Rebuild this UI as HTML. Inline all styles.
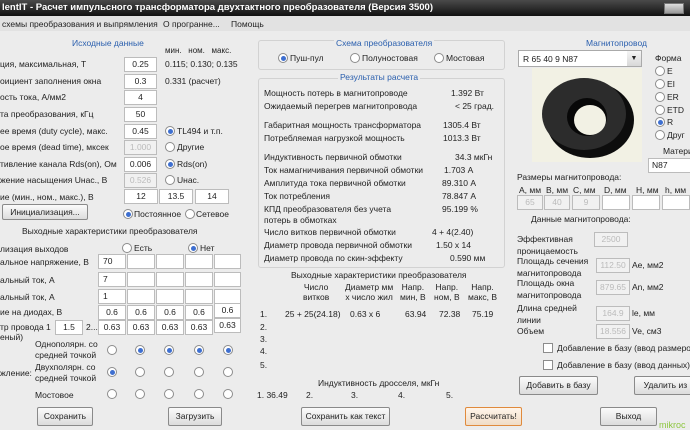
<!DOCTYPE html><html><head><meta charset="utf-8"><style>
*{margin:0;padding:0;box-sizing:border-box}
body{width:690px;height:430px;overflow:hidden;background:#ececec;font-family:"Liberation Sans",sans-serif;font-size:8.5px;color:#222;position:relative}
.a{position:absolute;white-space:nowrap}
.h{color:#2a5fae}
.i{position:absolute;background:#fff;border:1px solid #bcbcbc;height:15px;font-size:8.5px;text-align:center;line-height:13px;white-space:nowrap;overflow:hidden}
.d{background:#f1f1f1;color:#bbb}
.r{position:absolute;width:10px;height:10px;border-radius:50%;border:1px solid #8c8c8c;background:#fff}
.r.on::after{content:"";position:absolute;left:1.5px;top:1.5px;width:5px;height:5px;border-radius:50%;background:#3e6fd0}
.b{position:absolute;border:1px solid #8a8a8a;border-radius:2px;background:linear-gradient(#fbfbfb,#dcdcdc);text-align:center;font-size:8.5px;line-height:17px;height:19px;white-space:nowrap;overflow:hidden}
.g{position:absolute;border:1px solid #d2d2d2;border-radius:3px}
.cb{position:absolute;width:10px;height:10px;border:1px solid #8c8c8c;background:#fff}
</style></head><body>
<div class="a" style="left:0;top:0;width:690px;height:16px;background:linear-gradient(#4a4a4a,#111);color:#fff;font-weight:bold;padding:2px 0 0 2px;font-size:9.5px">lentIT - Расчет импульсного трансформатора двухтактного преобразователя (Версия 3500)</div>
<div class="a" style="left:664px;top:3px;width:20px;height:11px;background:linear-gradient(#ddd,#999);border:1px solid #777"></div>
<div class="a" style="left:0;top:16px;width:690px;height:15px;background:#e2e2e2"></div>
<div class="a" style="left:2px;top:19px">схемы преобразования и выпрямления</div>
<div class="a" style="left:163px;top:19px">О програнне...</div>
<div class="a" style="left:231px;top:19px">Помощь</div>

<!-- left -->
<div class="a h" style="left:72px;top:38px">Исходные данные</div>
<div class="a" style="left:165px;top:46px;font-size:8px">мин.&nbsp;&nbsp;&nbsp;ном.&nbsp;&nbsp;&nbsp;макс.</div>
<div class="a" style="left:0;top:59px">ция, максимальная, Т</div><div class="i" style="left:124px;top:57px;width:33px">0.25</div><div class="a" style="left:165px;top:59px">0.115; 0.130; 0.135</div>
<div class="a" style="left:0;top:76px">оициент заполнения окна</div><div class="i" style="left:124px;top:74px;width:33px">0.3</div><div class="a" style="left:165px;top:76px">0.331 (расчет)</div>
<div class="a" style="left:0;top:92px">ость тока, А/мм2</div><div class="i" style="left:124px;top:90px;width:33px">4</div>
<div class="a" style="left:0;top:109px">та преобразования, кГц</div><div class="i" style="left:124px;top:107px;width:33px">50</div>
<div class="a" style="left:0;top:126px">ее время (duty cycle), макс.</div><div class="i" style="left:124px;top:124px;width:33px">0.45</div><div class="r on" style="left:165px;top:126px"></div><div class="a" style="left:177px;top:126px">TL494 и т.п.</div>
<div class="a" style="left:0;top:142px">ое время (dead time), мксек</div><div class="i d" style="left:124px;top:140px;width:33px">1.000</div><div class="r" style="left:165px;top:142px"></div><div class="a" style="left:177px;top:142px">Другие</div>
<div class="a" style="left:0;top:159px">тивление канала Rds(on), Ом</div><div class="i" style="left:124px;top:157px;width:33px">0.006</div><div class="r on" style="left:165px;top:159px"></div><div class="a" style="left:177px;top:159px">Rds(on)</div>
<div class="a" style="left:0;top:175px">жение насыщения Uнас., В</div><div class="i d" style="left:124px;top:173px;width:33px">0.526</div><div class="r" style="left:165px;top:175px"></div><div class="a" style="left:177px;top:175px">Uнас.</div>
<div class="a" style="left:0;top:192px">ие (мин., ном., макс.), В</div><div class="i" style="left:124px;top:189px;width:34px">12</div><div class="i" style="left:159px;top:189px;width:34px">13.5</div><div class="i" style="left:195px;top:189px;width:34px">14</div>
<div class="b" style="left:2px;top:204px;width:86px;height:16px;line-height:14px">Инициализация...</div>
<div class="r on" style="left:123px;top:209px"></div><div class="a" style="left:134px;top:209px">Постоянное</div><div class="r" style="left:185px;top:209px"></div><div class="a" style="left:196px;top:209px">Сетевое</div>
<div class="a" style="left:22px;top:226px">Выходные характеристики преобразователя</div>
<div class="a" style="left:0;top:244px">лизация выходов</div><div class="r" style="left:122px;top:243px"></div><div class="a" style="left:134px;top:243px">Есть</div><div class="r on" style="left:188px;top:243px"></div><div class="a" style="left:200px;top:243px">Нет</div>
<div class="a" style="left:0;top:257px">альное напряжение, В</div><div class="a" style="left:0;top:275px">альный ток, А</div><div class="a" style="left:0;top:292px">альный ток, А</div><div class="a" style="left:0;top:307px">ие на диодах, В</div><div class="a" style="left:0;top:322px">тр провода 1</div><div class="a" style="left:0;top:332px">еный)</div>
<div class="i" style="left:55px;top:320px;width:28px">1.5</div><div class="a" style="left:86px;top:322px">2...</div>
<div class="i" style="left:98px;top:254px;width:28px;text-align:left;padding-left:4px">70</div><div class="i" style="left:127px;top:254px;width:28px"></div><div class="i" style="left:156px;top:254px;width:28px"></div><div class="i" style="left:185px;top:254px;width:28px"></div><div class="i" style="left:214px;top:254px;width:27px"></div>
<div class="i" style="left:98px;top:272px;width:28px;text-align:left;padding-left:4px">7</div><div class="i" style="left:127px;top:272px;width:28px"></div><div class="i" style="left:156px;top:272px;width:28px"></div><div class="i" style="left:185px;top:272px;width:28px"></div><div class="i" style="left:214px;top:272px;width:27px"></div>
<div class="i" style="left:98px;top:289px;width:28px;text-align:left;padding-left:4px">1</div><div class="i" style="left:127px;top:289px;width:28px"></div><div class="i" style="left:156px;top:289px;width:28px"></div><div class="i" style="left:185px;top:289px;width:28px"></div><div class="i" style="left:214px;top:289px;width:27px"></div>
<div class="i" style="left:98px;top:305px;width:28px">0.6</div><div class="i" style="left:127px;top:305px;width:28px">0.6</div><div class="i" style="left:156px;top:305px;width:28px">0.6</div><div class="i" style="left:185px;top:305px;width:28px">0.6</div><div class="i" style="left:214px;top:303px;width:27px">0.6</div>
<div class="i" style="left:98px;top:320px;width:28px">0.63</div><div class="i" style="left:127px;top:320px;width:28px">0.63</div><div class="i" style="left:156px;top:320px;width:28px">0.63</div><div class="i" style="left:185px;top:320px;width:28px">0.63</div><div class="i" style="left:214px;top:318px;width:27px">0.63</div>
<div class="a" style="left:35px;top:339px;line-height:11px">Однополярн. со<br>средней точкой</div>
<div class="a" style="left:0;top:368px">жление:</div><div class="a" style="left:35px;top:362px;line-height:11px">Двухполярн. со<br>средней точкой</div>
<div class="a" style="left:35px;top:390px">Мостовое</div>
<div class="r" style="left:107px;top:345px"></div><div class="r on" style="left:135px;top:345px"></div><div class="r on" style="left:164px;top:345px"></div><div class="r on" style="left:194px;top:345px"></div><div class="r on" style="left:223px;top:345px"></div>
<div class="r on" style="left:107px;top:367px"></div><div class="r" style="left:135px;top:367px"></div><div class="r" style="left:164px;top:367px"></div><div class="r" style="left:194px;top:367px"></div><div class="r" style="left:223px;top:367px"></div>
<div class="r" style="left:107px;top:389px"></div><div class="r" style="left:135px;top:389px"></div><div class="r" style="left:164px;top:389px"></div><div class="r" style="left:194px;top:389px"></div><div class="r" style="left:223px;top:389px"></div>
<div class="b" style="left:37px;top:407px;width:56px">Сохранить</div><div class="b" style="left:168px;top:407px;width:54px">Загрузить</div>

<!-- center -->
<div class="g" style="left:258px;top:40px;width:247px;height:30px"></div>
<div class="a h" style="left:334px;top:38px;background:#ececec;padding:0 2px">Схема преобразователя</div>
<div class="r on" style="left:278px;top:53px"></div><div class="a" style="left:290px;top:53px">Пуш-пул</div>
<div class="r" style="left:350px;top:53px"></div><div class="a" style="left:362px;top:53px">Полуностовая</div>
<div class="r" style="left:434px;top:53px"></div><div class="a" style="left:446px;top:53px">Мостовая</div>
<div class="g" style="left:258px;top:78px;width:247px;height:190px"></div>
<div class="a h" style="left:338px;top:72px;background:#ececec;padding:0 2px">Результаты расчета</div>
<div class="a" style="left:264px;top:88px">Мощность потерь в магнитопроводе</div><div class="a" style="left:451px;top:88px">1.392 Вт</div>
<div class="a" style="left:264px;top:101px">Ожидаемый перегрев магнитопровода</div><div class="a" style="left:455px;top:101px">&lt; 25 град.</div>
<div class="a" style="left:264px;top:120px">Габаритная мощность трансформатора</div><div class="a" style="left:443px;top:120px">1305.4 Вт</div>
<div class="a" style="left:264px;top:133px">Потребляемая нагрузкой мощность</div><div class="a" style="left:443px;top:133px">1013.3 Вт</div>
<div class="a" style="left:264px;top:152px">Индуктивность первичной обмотки</div><div class="a" style="left:455px;top:152px">34.3 мкГн</div>
<div class="a" style="left:264px;top:165px">Ток намагничивания первичной обмотки</div><div class="a" style="left:444px;top:165px">1.703 А</div>
<div class="a" style="left:264px;top:178px">Амплитуда тока первичной обмотки</div><div class="a" style="left:442px;top:178px">89.310 А</div>
<div class="a" style="left:264px;top:191px">Ток потребления</div><div class="a" style="left:442px;top:191px">78.847 А</div>
<div class="a" style="left:264px;top:204px;line-height:11px">КПД преобразователя без учета<br>потерь в обмотках</div><div class="a" style="left:442px;top:204px">95.199 %</div>
<div class="a" style="left:264px;top:227px">Число витков первичной обмотки</div><div class="a" style="left:432px;top:227px">4 + 4(2.40)</div>
<div class="a" style="left:264px;top:240px">Диаметр провода первичной обмотки</div><div class="a" style="left:436px;top:240px">1.50 x 14</div>
<div class="a" style="left:264px;top:253px">Диаметр провода по скин-эффекту</div><div class="a" style="left:450px;top:253px">0.590 мм</div>
<div class="a" style="left:291px;top:270px">Выходные характеристики преобразователя</div>
<div class="a" style="left:303px;top:282px;line-height:10px;text-align:center">Число<br>витков</div>
<div class="a" style="left:345px;top:282px;line-height:10px;text-align:center">Диаметр мм<br>x число жил</div>
<div class="a" style="left:400px;top:282px;line-height:10px;text-align:center">Напр.<br>мин, В</div>
<div class="a" style="left:434px;top:282px;line-height:10px;text-align:center">Напр.<br>ном, В</div>
<div class="a" style="left:468px;top:282px;line-height:10px;text-align:center">Напр.<br>макс, В</div>
<div class="a" style="left:260px;top:309px">1.</div><div class="a" style="left:285px;top:309px">25 + 25(24.18)</div><div class="a" style="left:350px;top:309px">0.63 x 6</div><div class="a" style="left:405px;top:309px">63.94</div><div class="a" style="left:439px;top:309px">72.38</div><div class="a" style="left:472px;top:309px">75.19</div>
<div class="a" style="left:260px;top:322px">2.</div><div class="a" style="left:260px;top:334px">3.</div><div class="a" style="left:260px;top:346px">4.</div><div class="a" style="left:260px;top:360px">5.</div>
<div class="a" style="left:318px;top:378px">Индуктивность дросселя, мкГн</div>
<div class="a" style="left:257px;top:390px">1. 36.49</div><div class="a" style="left:306px;top:390px">2.</div><div class="a" style="left:351px;top:390px">3.</div><div class="a" style="left:398px;top:390px">4.</div><div class="a" style="left:446px;top:390px">5.</div>
<div class="b" style="left:301px;top:407px;width:89px">Сохранить как текст</div>
<div class="b" style="left:465px;top:407px;width:57px;border:1px solid #e08a3c;background:linear-gradient(#fff5ea,#f0dcc6)">Рассчитать!</div>

<!-- right -->
<div class="a h" style="left:586px;top:38px">Магнитопровод</div>
<div class="a" style="left:518px;top:50px;width:124px;height:17px;background:#fff;border:1px solid #aaa;padding:3px 4px">R 65 40 9 N87</div>
<div class="a" style="left:627px;top:51px;width:14px;height:15px;background:linear-gradient(#f5f5f5,#d8d8d8);font-size:7px;text-align:center;line-height:15px">▼</div>
<div class="a" style="left:532px;top:68px;width:110px;height:94px;background:#f2f1e4"></div>
<svg class="a" style="left:534px;top:72px" width="106" height="90"><ellipse cx="56" cy="48" rx="44" ry="38" fill="#0d0d0d"/><ellipse cx="50" cy="42" rx="42" ry="36" fill="#2c2c2c"/><ellipse cx="53" cy="45" rx="20" ry="19" fill="#080808"/><ellipse cx="56" cy="48" rx="16" ry="15" fill="#f2f1e4"/></svg>
<div class="a" style="left:655px;top:53px">Форма</div>
<div class="r" style="left:655px;top:66px"></div><div class="a" style="left:667px;top:66px">E</div>
<div class="r" style="left:655px;top:79px"></div><div class="a" style="left:667px;top:79px">EI</div>
<div class="r" style="left:655px;top:92px"></div><div class="a" style="left:667px;top:92px">ER</div>
<div class="r" style="left:655px;top:105px"></div><div class="a" style="left:667px;top:105px">ETD</div>
<div class="r on" style="left:655px;top:117px"></div><div class="a" style="left:667px;top:117px">R</div>
<div class="r" style="left:655px;top:130px"></div><div class="a" style="left:667px;top:130px">Друг</div>
<div class="a" style="left:663px;top:146px">Матери</div>
<div class="i" style="left:648px;top:158px;width:44px;text-align:left;padding-left:3px">N87</div>
<div class="a" style="left:517px;top:172px">Размеры магнитопровода:</div>
<div class="a" style="left:519px;top:185px">А, мм</div><div class="a" style="left:546px;top:185px">B, мм</div><div class="a" style="left:573px;top:185px">C, мм</div><div class="a" style="left:604px;top:185px">D, мм</div><div class="a" style="left:636px;top:185px">H, мм</div><div class="a" style="left:665px;top:185px">h, мм</div>
<div class="i d" style="left:517px;top:195px;width:26px">65</div><div class="i d" style="left:544px;top:195px;width:26px">40</div><div class="i d" style="left:572px;top:195px;width:28px">9</div><div class="i" style="left:602px;top:195px;width:28px"></div><div class="i" style="left:632px;top:195px;width:28px"></div><div class="i" style="left:662px;top:195px;width:28px"></div>
<div class="a" style="left:531px;top:214px">Данные магнитопровода:</div>
<div class="a" style="left:517px;top:233px;line-height:12px">Эффективная<br>проницаемость</div><div class="i d" style="left:594px;top:232px;width:34px">2500</div>
<div class="a" style="left:517px;top:255px;line-height:12px">Площадь сечения<br>магнитопровода</div><div class="i d" style="left:596px;top:258px;width:34px">112.50</div><div class="a" style="left:632px;top:260px">Ae, мм2</div>
<div class="a" style="left:517px;top:277px;line-height:12px">Площадь окна<br>магнитопровода</div><div class="i d" style="left:596px;top:280px;width:34px">879.65</div><div class="a" style="left:632px;top:282px">An, мм2</div>
<div class="a" style="left:517px;top:302px;line-height:12px">Длина средней<br>линии</div><div class="i d" style="left:596px;top:306px;width:34px">164.9</div><div class="a" style="left:632px;top:308px">le, мм</div>
<div class="a" style="left:517px;top:326px">Объем</div><div class="i d" style="left:596px;top:324px;width:34px">18.556</div><div class="a" style="left:632px;top:326px">Ve, см3</div>
<div class="cb" style="left:543px;top:343px"></div><div class="a" style="left:557px;top:343px">Добавление в базу (ввод размеров)</div>
<div class="cb" style="left:543px;top:360px"></div><div class="a" style="left:557px;top:360px">Добавление в базу (ввод данных)</div>
<div class="b" style="left:519px;top:376px;width:79px">Добавить в базу</div>
<div class="b" style="left:634px;top:376px;width:70px">Удалить из б</div>
<div class="b" style="left:600px;top:407px;width:57px">Выход</div>
<div class="a" style="left:659px;top:420px;color:#8dc63f;font-size:9px">mikroc</div>
</body></html>
